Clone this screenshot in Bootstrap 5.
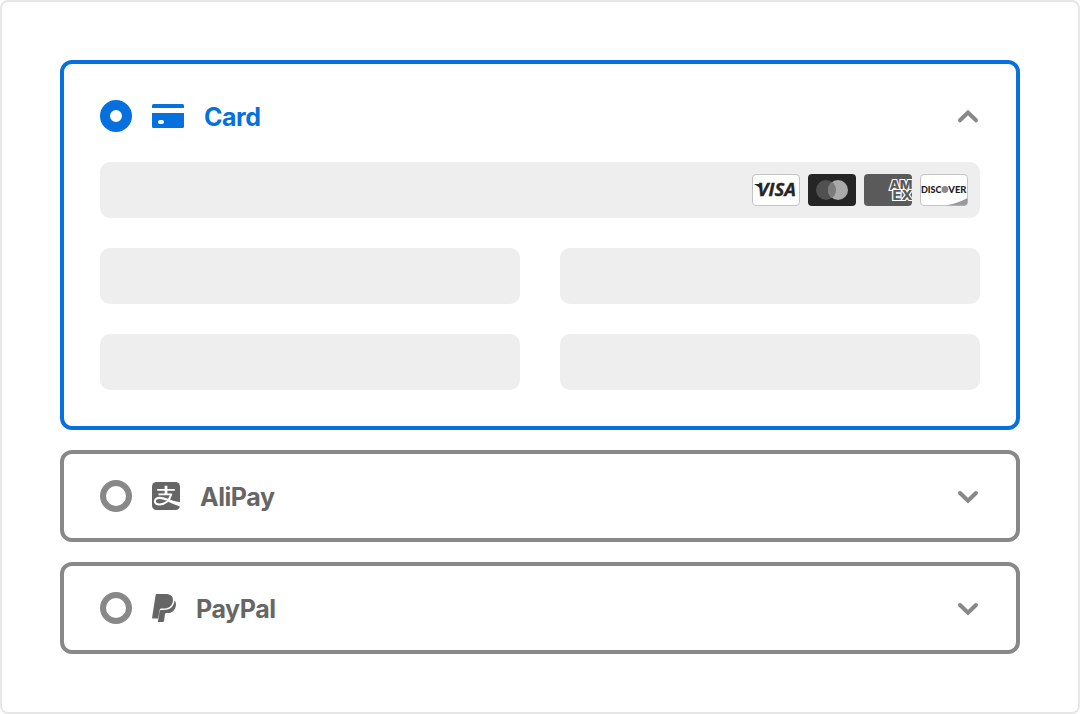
<!DOCTYPE html>
<html lang="en">
<head>
<meta charset="utf-8">
<meta name="viewport" content="width=device-width, initial-scale=1">
<title>Payment methods</title>
<link href="https://cdn.jsdelivr.net/npm/bootstrap@5.3.0/dist/css/bootstrap.min.css" rel="stylesheet">
<style>
  body { font-family: Inter, "Liberation Sans", sans-serif; background: #fff; }
  .frame { height: 714px; border: 2px solid #e6e6e6; border-radius: 8px; padding: 58px; }
  .stack { gap: 20px; }
  .method { border: 4px solid #888; border-radius: 12px; padding: 26px 36px; color: #666; background: #fff; }
  .method.selected { border-color: #0570de; padding: 36px; color: #0570de; }
  .method-head { gap: 20px; height: 32px; }
  .method-name { font-size: 25px; font-weight: 650; line-height: 32px; letter-spacing: -.45px; position: relative; top: 1px; }
  .radio { width: 32px; height: 32px; border: 6px solid #888; border-radius: 50%; }
  .selected .radio { border: 10px solid #0570de; }
  .fields { display: grid; grid-template-columns: 1fr 1fr; gap: 30px 40px; margin-top: 30px; }
  .field { height: 56px; background: #eee; border-radius: 10px; }
  .field.wide { grid-column: 1 / -1; padding-right: 12px; gap: 8px; }
  svg { display: block; flex: none; }
  .chev { margin-right: 1px; color: #888; }
</style>
</head>
<body>
<main class="frame">
  <div class="stack d-flex flex-column">
    <section class="method selected">
      <div class="method-head d-flex align-items-center">
        <span class="radio"></span>
        <svg width="32" height="24" viewBox="0 0 32 24" fill="currentColor"><path d="M0 4V1.500Q0 0 1.500 0H30.500Q32 0 32 1.500V4Z"/><path fill-rule="evenodd" d="M0 9H32V22.500Q32 24 30.500 24H1.500Q0 24 0 22.500ZM8 16a2 2 0 0 0 0 4h2a2 2 0 0 0 0-4Z"/></svg>
        <span class="method-name">Card</span>
        <svg class="chev ms-auto" width="22" height="16" viewBox="0 0 22 16" fill="none" stroke="currentColor" stroke-width="4" stroke-linecap="round"><path d="M3 12.300 11 4.500 19 12.300"/></svg>
      </div>
      <div class="fields">
        <div class="field wide d-flex align-items-center justify-content-end">
          <svg width="48" height="32" viewBox="0 0 48 32"><rect x=".5" y=".5" width="47" height="31" rx="3.500" fill="#fff" stroke="#c4c4c4"/><text x="5.500" y="22.300" textLength="38.500" lengthAdjust="spacingAndGlyphs" font-family="Open Sans, sans-serif" font-size="17" font-weight="700" font-style="italic" fill="#252525" stroke="#252525" stroke-width=".3">VISA</text><path d="M2.500 10H8L10 17Q7.500 12.500 2.500 10.500Z" fill="#252525"/></svg>
          <svg width="48" height="32" viewBox="0 0 48 32"><rect width="48" height="32" rx="4" fill="#252525"/><circle cx="18" cy="16" r="10" fill="#505050"/><circle cx="30" cy="16" r="10" fill="#aaa"/><path d="M24 8a10 10 0 0 1 0 16 10 10 0 0 1 0-16Z" fill="#7c7c7c"/></svg>
          <svg width="48" height="32" viewBox="0 0 48 32"><defs><clipPath id="amexClip"><rect width="48" height="32" rx="4"/></clipPath></defs><g clip-path="url(#amexClip)"><rect width="48" height="32" fill="#5a5a5a"/><text font-family="Inter, sans-serif" font-size="12.500" font-weight="800" fill="#5a5a5a" stroke="#fff" stroke-width="2.200" paint-order="stroke" stroke-linejoin="miter" stroke-miterlimit="2"><tspan x="25.500" y="15.800" textLength="23" lengthAdjust="spacingAndGlyphs">AM</tspan><tspan x="28.500" y="26.300" textLength="20" lengthAdjust="spacingAndGlyphs">EX</tspan></text></g></svg>
          <svg width="48" height="32" viewBox="0 0 48 32"><rect x=".5" y=".5" width="47" height="31" rx="3.500" fill="#fff" stroke="#c4c4c4"/><path d="M26 31.500Q37 29.500 47.500 24V28Q47.500 31.500 44 31.500Z" fill="#999"/><g font-family="Lato, sans-serif" font-size="9.500" font-weight="900" fill="#1c1c1c"><text x="1" y="19" textLength="20.500" lengthAdjust="spacingAndGlyphs">DISC</text><text x="28.300" y="19" textLength="18.200" lengthAdjust="spacingAndGlyphs">VER</text></g><circle cx="24.900" cy="15.500" r="3.400" fill="#8c8c8c"/></svg>
        </div>
        <div class="field"></div>
        <div class="field"></div>
        <div class="field"></div>
        <div class="field"></div>
      </div>
    </section>

    <section class="method">
      <div class="method-head d-flex align-items-center">
        <span class="radio"></span>
        <svg width="28" height="28" viewBox="0 0 28 28"><rect width="28" height="28" rx="4.500" fill="#666"/><g fill="none" stroke="#fff"><path d="M5.200 7.800H22.800M6.500 12.300H20" stroke-width="1.800"/><path d="M14 3.800V12.300" stroke-width="2.800"/><path d="M19.200 12.300C17.500 18.500 13 22.500 7.500 22.500C4.500 22.500 2.900 21.200 2.900 19.300C2.900 17.300 4.800 15.900 7.500 15.900C13 15.900 18.500 19.500 28 22.200" stroke-width="2.100"/></g><path d="M16 17.800Q21 19.600 28 20V24.400Q22 22.800 15 19.300Z" fill="#fff"/></svg>
        <span class="method-name">AliPay</span>
        <svg class="chev ms-auto" width="22" height="16" viewBox="0 0 22 16" fill="none" stroke="currentColor" stroke-width="4" stroke-linecap="round"><path d="M3 5 11 12.800 19 5"/></svg>
      </div>
    </section>

    <section class="method">
      <div class="method-head d-flex align-items-center">
        <span class="radio"></span>
        <svg width="24" height="28" viewBox="0 0 24 28" fill="#666"><path d="M4.800 0H13.500C18.500 0 21.500 2.600 20.900 7C20.200 12.200 16.800 14.500 11.700 14.500H9.200Q8 14.500 7.700 15.800L6.100 24.500H.7Q0 24.500.1 23.700L3.600 1Q3.800 0 4.800 0Z"/><path d="M22.500 6.500C24 8 24.200 10 23.700 12.200C22.700 17 19.500 19 15.500 19H14.200Q13.200 19 13 20L12 27Q11.800 28 10.800 28H6.600Q5.800 28 6 27.100L7.700 17.100Q7.900 16 9 16H11.700C17.500 16 21.400 13.200 22.300 7.800Z"/></svg>
        <span class="method-name">PayPal</span>
        <svg class="chev ms-auto" width="22" height="16" viewBox="0 0 22 16" fill="none" stroke="currentColor" stroke-width="4" stroke-linecap="round"><path d="M3 5 11 12.800 19 5"/></svg>
      </div>
    </section>
  </div>
</main>
<script src="https://cdn.jsdelivr.net/npm/bootstrap@5.3.0/dist/js/bootstrap.bundle.min.js"></script>
</body>
</html>
